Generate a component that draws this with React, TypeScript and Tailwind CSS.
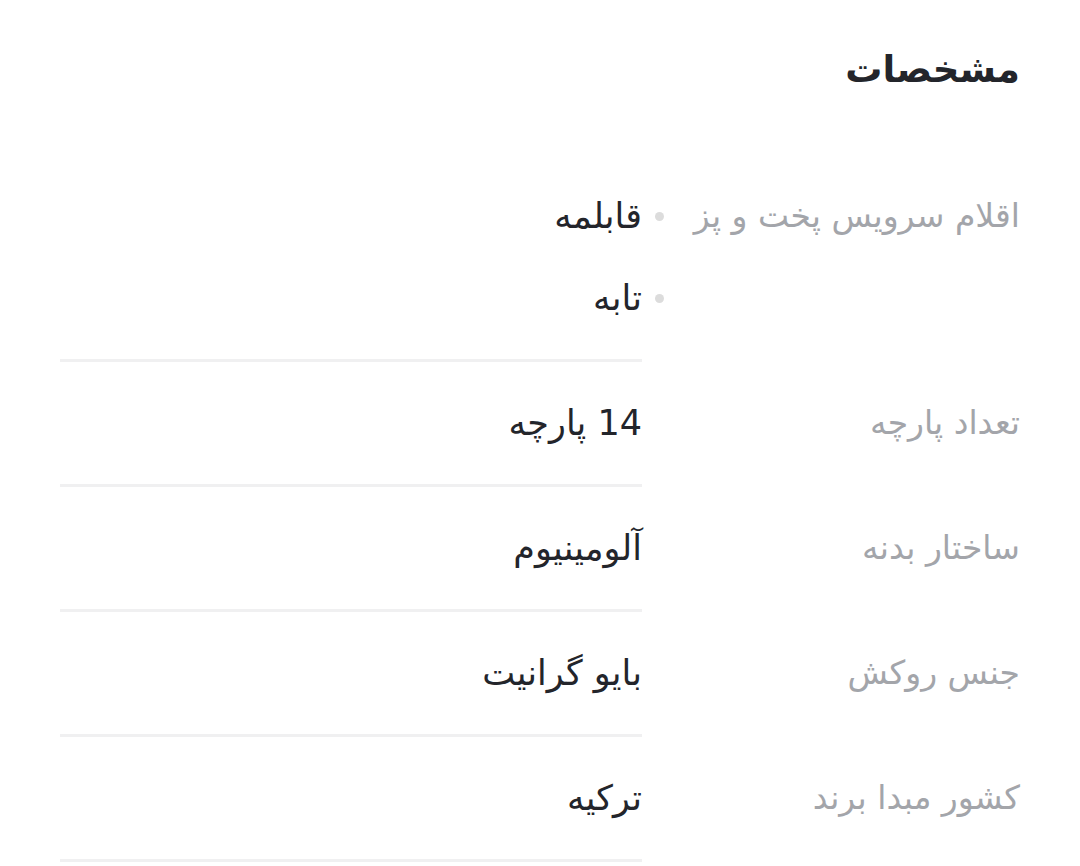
const SPECS: { label: string; values: string[] }[] = [
  { label: 'اقلام سرویس پخت و پز', values: ['قابلمه', 'تابه'] },
  { label: 'تعداد پارچه', values: ['14 پارچه'] },
  { label: 'ساختار بدنه', values: ['آلومینیوم'] },
  { label: 'جنس روکش', values: ['بایو گرانیت'] },
  { label: 'کشور مبدا برند', values: ['ترکیه'] },
];

export default function App() {
  return (
    <div
      dir="rtl"
      className="min-h-[866px] bg-white px-[60px] pt-[44px] font-['DejaVu_Sans',sans-serif]"
    >
      {/* Header */}
      <h2 className="text-[37px] font-bold leading-[52px] text-[#23252b]">مشخصات</h2>

      {/* Spec rows */}
      <div className="mt-[59px]">
        {SPECS.map((spec) => (
          <div key={spec.label} className="flex">
            <div className="w-[378px] shrink-0 py-[20px] text-[33px] leading-[82px] text-[#a3a5aa]">
              {spec.label}
            </div>
            <div className="flex-1 border-b-[3px] border-[#f0f0f1] py-[20px]">
              {spec.values.length > 1 ? (
                <ul>
                  {spec.values.map((v) => (
                    <li key={v} className="relative text-[35px] leading-[82px] text-[#23252b]">
                      <span className="absolute -right-[22px] top-[37px] h-[9px] w-[9px] rounded-full bg-[#dcdcdc]" />
                      {v}
                    </li>
                  ))}
                </ul>
              ) : (
                <div className="text-[35px] leading-[82px] text-[#23252b]">{spec.values[0]}</div>
              )}
            </div>
          </div>
        ))}
      </div>
    </div>
  );
}
